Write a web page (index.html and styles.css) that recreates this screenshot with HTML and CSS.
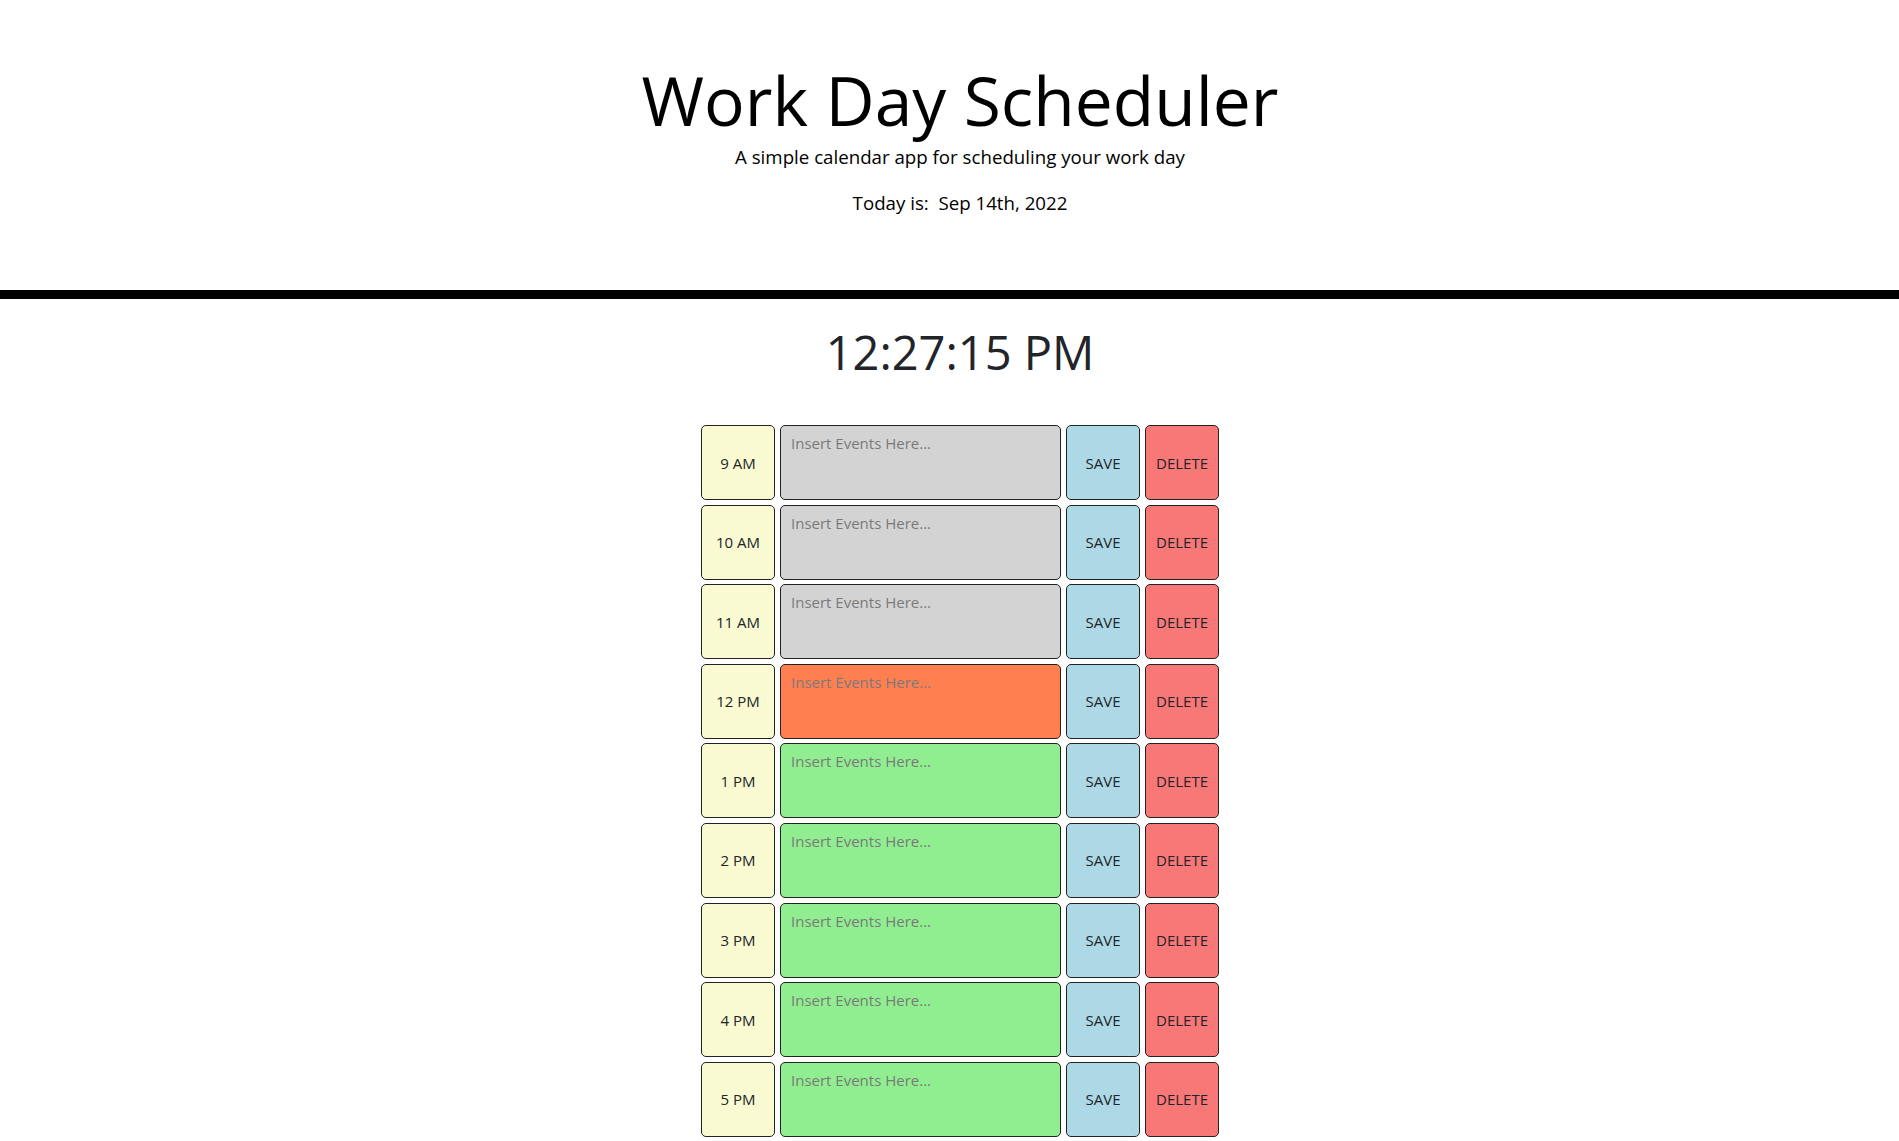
FILE: index.html
```html
<!DOCTYPE html>
<html lang="en">
<head>
<meta charset="UTF-8">
<title>Work Day Scheduler</title>
<link rel="stylesheet" href="styles.css">
</head>
<body>
<header class="jumbotron">
  <h1 class="title">Work Day Scheduler</h1>
  <p class="lead">A simple calendar app for scheduling your work day</p>
  <p class="lead today">Today is:&nbsp; Sep 14th, 2022</p>
</header>
<main class="container">
  <div class="clock">12:27:15 PM</div>
  <div class="schedule">
    <div class="row"><div class="hour">9 AM</div><textarea class="event past" placeholder="Insert Events Here..."></textarea><button class="btn save">SAVE</button><button class="btn delete">DELETE</button></div>
    <div class="row"><div class="hour">10 AM</div><textarea class="event past" placeholder="Insert Events Here..."></textarea><button class="btn save">SAVE</button><button class="btn delete">DELETE</button></div>
    <div class="row"><div class="hour">11 AM</div><textarea class="event past" placeholder="Insert Events Here..."></textarea><button class="btn save">SAVE</button><button class="btn delete">DELETE</button></div>
    <div class="row"><div class="hour">12 PM</div><textarea class="event present" placeholder="Insert Events Here..."></textarea><button class="btn save">SAVE</button><button class="btn delete">DELETE</button></div>
    <div class="row"><div class="hour">1 PM</div><textarea class="event future" placeholder="Insert Events Here..."></textarea><button class="btn save">SAVE</button><button class="btn delete">DELETE</button></div>
    <div class="row"><div class="hour">2 PM</div><textarea class="event future" placeholder="Insert Events Here..."></textarea><button class="btn save">SAVE</button><button class="btn delete">DELETE</button></div>
    <div class="row"><div class="hour">3 PM</div><textarea class="event future" placeholder="Insert Events Here..."></textarea><button class="btn save">SAVE</button><button class="btn delete">DELETE</button></div>
    <div class="row"><div class="hour">4 PM</div><textarea class="event future" placeholder="Insert Events Here..."></textarea><button class="btn save">SAVE</button><button class="btn delete">DELETE</button></div>
    <div class="row"><div class="hour">5 PM</div><textarea class="event future" placeholder="Insert Events Here..."></textarea><button class="btn save">SAVE</button><button class="btn delete">DELETE</button></div>
  </div>
</main>
</body>
</html>
```

FILE: styles.css
```css
* { box-sizing: border-box; }
html { overflow-x: hidden; }
body {
  margin: 0;
  width: 1920px;
  font-family: "Open Sans", "Noto Sans", sans-serif;
  color: #212529;
  background: #fff;
}
.jumbotron {
  text-align: center;
  color: #000;
  padding: 59px 0 74px;
  border-bottom: 9px solid #000;
}
.title {
  margin: 0;
  font-size: 67.7px;
  font-weight: 400;
  line-height: 82px;
}
.lead {
  margin: 3px 0 0;
  font-size: 18.7px;
  font-weight: 400;
  line-height: 26px;
}
.today { margin-top: 20px; }
.container {
  display: flex;
  flex-direction: column;
  align-items: center;
}
.clock {
  margin-top: 21px;
  font-size: 47px;
  line-height: 64px;
  color: #212529;
}
.schedule {
  margin-top: 41px;
  display: flex;
  flex-direction: column;
  gap: 4.6px;
}
.row {
  display: flex;
  gap: 5px;
  height: 75px;
}
.hour, .event, .btn {
  border: 1px solid #222;
  border-radius: 5px;
  height: 100%;
}
.hour {
  width: 74px;
  background: #fafad2;
  display: flex;
  align-items: center;
  justify-content: center;
  font-size: 15px;
}
.event {
  width: 281px;
  margin: 0;
  padding: 7px 10px;
  resize: none;
  font-family: "Open Sans", "Noto Sans", sans-serif;
  font-size: 15px;
  color: #212529;
}
.event::placeholder { color: #7a7a7a; opacity: 1; }
.past { background: #d3d3d3; }
.present { background: #ff7f50; }
.future { background: #90ee90; }
.btn {
  width: 74px;
  padding: 0;
  font-family: "Open Sans", "Noto Sans", sans-serif;
  font-size: 15px;
  color: #212529;
}
.save { background: #add8e6; }
.delete { background: #f87777; }
```
